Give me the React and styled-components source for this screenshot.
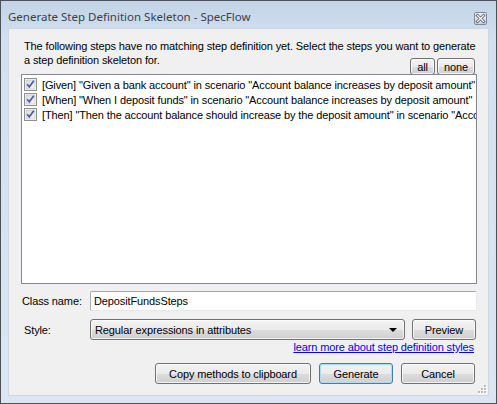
import React, { useState } from 'react';
import styled, { createGlobalStyle, css } from 'styled-components';

const GlobalStyle = createGlobalStyle`
  html, body {
    margin: 0;
    padding: 0;
    background: #ffffff;
  }
  * { box-sizing: border-box; }
`;

const steps = [
  { id: 1, kind: 'Given', text: '"Given a bank account" in scenario "Account balance increases by deposit amount"' },
  { id: 2, kind: 'When', text: '"When I deposit funds" in scenario "Account balance increases by deposit amount"' },
  { id: 3, kind: 'Then', text: '"Then the account balance should increase by the deposit amount" in scenario "Account balance increases by deposit amount"' },
];

const Window = styled.div`
  width: 497px;
  height: 404px;
  border: 1px solid #4d5157;
  background: linear-gradient(to bottom, #c3d4e8 0px, #d3e0ef 40px, #dbe6f2 100%);
  display: flex;
  flex-direction: column;
  padding: 0 7px 7px 7px;
  font-family: 'Liberation Sans', Arial, sans-serif;
  font-size: 11px;
  letter-spacing: -0.12px;
  color: #000;
`;

const TitleBar = styled.div`
  height: 27px;
  display: flex;
  align-items: center;
  justify-content: space-between;
  padding: 0 2px 0 0;
`;

const Title = styled.div`
  font-family: 'Noto Sans', 'Open Sans', sans-serif;
  font-size: 11.5px;
  letter-spacing: 0;
  color: #3a3f47;
  margin-top: 3px;
`;

const CloseBox = styled.div`
  width: 13px;
  height: 13px;
  margin-top: 7px;
  display: flex;
`;

const Client = styled.div`
  flex: 1;
  background: #f0f0f0;
  border: 1px solid #cdd7e3;
  padding: 10px 11px 0 12px;
  display: flex;
  flex-direction: column;
  position: relative;
`;

const Header = styled.div`
  display: grid;
  grid-template-columns: 1fr auto;
`;

const Description = styled.p`
  grid-row: 1;
  grid-column: 1 / -1;
  margin: 0 0 7px 3px;
  line-height: 14px;
  width: 452px;
`;

const SelectButtons = styled.div`
  grid-row: 1;
  grid-column: 2;
  align-self: end;
  display: flex;
  gap: 2px;
  margin: 0 2px -1px 0;
`;

const buttonSkin = css`
  font-family: 'Liberation Sans', Arial, sans-serif;
  font-size: 11px;
  letter-spacing: -0.12px;
  color: #000;
  border: 1px solid #707070;
  border-radius: 3px;
  background: linear-gradient(to bottom, #f2f2f2 0%, #ebebeb 50%, #dddddd 51%, #cfcfcf 100%);
  box-shadow: inset 0 0 0 1px rgba(255, 255, 255, 0.75);
  padding: 0;
`;

const SmallButton = styled.button`
  ${buttonSkin}
  width: ${p => p.$w}px;
  height: 17px;
  line-height: 14px;
`;

const StepList = styled.div`
  height: 210px;
  background: #fff;
  border: 1px solid #828790;
  padding: 2px 0 0 2px;
  overflow: hidden;
`;

const StepRow = styled.label`
  display: flex;
  align-items: center;
  height: 15px;
  gap: 5px;
  white-space: nowrap;
  cursor: default;
`;

const CheckBox = styled.span`
  flex: none;
  width: 13px;
  height: 13px;
  display: flex;
`;

const FieldRow = styled.div`
  display: flex;
  align-items: center;
  margin-top: ${p => p.$top}px;
`;

const FieldLabel = styled.span`
  width: 69px;
  padding-left: ${p => p.$indent}px;
  flex: none;
`;

const TextInput = styled.input`
  flex: 1;
  height: 20px;
  border: 1px solid #abadb3;
  border-top-color: #a3a6ad;
  border-right-color: #e3e9ef;
  border-bottom-color: #e3e9ef;
  border-radius: 2px;
  background: #fff;
  font-family: 'Liberation Sans', Arial, sans-serif;
  font-size: 11px;
  letter-spacing: -0.12px;
  padding: 0 0 0 3px;
  outline: none;
`;

const Combo = styled.div`
  ${buttonSkin}
  width: 315px;
  height: 21px;
  display: flex;
  align-items: center;
  justify-content: space-between;
  padding: 0 7px 0 4px;
`;

const Arrow = styled.span`
  width: 0;
  height: 0;
  border-left: 4px solid transparent;
  border-right: 4px solid transparent;
  border-top: 4px solid #000;
`;

const Button = styled.button`
  ${buttonSkin}
  width: ${p => p.$w}px;
  height: 21px;
  ${p => p.$default && css`
    border-color: #3c7fb1;
    box-shadow: inset 0 0 0 1px #a9dcf5, inset 0 0 2px 1px #c6ebfc;
  `}
`;

const PreviewButton = styled(Button)`
  margin-left: auto;
  margin-right: 1px;
`;

const LinkRow = styled.div`
  display: flex;
  justify-content: flex-end;
  padding-right: 3px;
`;

const Link = styled.a`
  color: #0000ff;
  text-decoration: underline;
  line-height: 14px;
`;

const ButtonBar = styled.div`
  display: flex;
  justify-content: flex-end;
  gap: 8px;
  margin-top: 9px;
  padding-right: 2px;
`;

const Grip = styled.svg`
  position: absolute;
  right: 1px;
  bottom: 1px;
`;

const CloseIcon = () => (
  <svg width="13" height="13" viewBox="0 0 13 13">
    <defs>
      <linearGradient id="cg" x1="0" y1="0" x2="0" y2="1">
        <stop offset="0" stopColor="#eef2f8" />
        <stop offset="1" stopColor="#c9d3e0" />
      </linearGradient>
    </defs>
    <rect x="0.5" y="0.5" width="12" height="12" rx="1.5" fill="url(#cg)" stroke="#7d8898" />
    <path d="M3.5 3.5 L9.5 9.5 M9.5 3.5 L3.5 9.5" stroke="#5f6670" strokeWidth="3" strokeLinecap="square" />
    <path d="M3.5 3.5 L9.5 9.5 M9.5 3.5 L3.5 9.5" stroke="#ffffff" strokeWidth="1.2" strokeLinecap="square" />
  </svg>
);

const CheckIcon = ({ checked }) => (
  <svg width="13" height="13" viewBox="0 0 13 13">
    <defs>
      <linearGradient id="cbg" x1="0" y1="0" x2="1" y2="1">
        <stop offset="0" stopColor="#dcdcdc" />
        <stop offset="1" stopColor="#f6f6f6" />
      </linearGradient>
    </defs>
    <rect x="0.5" y="0.5" width="12" height="12" fill="#fff" stroke="#8e8f8f" />
    <rect x="2" y="2" width="9" height="9" fill="url(#cbg)" stroke="#b9b9b9" strokeWidth="0.6" />
    {checked && (
      <path d="M3.2 6.3 L5.3 8.8 L9.8 2.8" fill="none" stroke="#4a5f97" strokeWidth="1.7" />
    )}
  </svg>
);

const GripIcon = () => (
  <Grip width="10" height="10" viewBox="0 0 10 10">
    {[[7, 1], [4, 4], [7, 4], [1, 7], [4, 7], [7, 7]].map(([x, y]) => (
      <g key={`${x}-${y}`}>
        <rect x={x + 1} y={y + 1} width="2" height="2" fill="#ffffff" />
        <rect x={x} y={y} width="2" height="2" fill="#b8bcc2" />
      </g>
    ))}
  </Grip>
);

export default function App() {
  const [checked, setChecked] = useState(steps.map(() => true));
  const [className, setClassName] = useState('DepositFundsSteps');

  const toggle = (i) => setChecked(prev => prev.map((c, j) => (j === i ? !c : c)));

  return (
    <>
      <GlobalStyle />
      <Window>
        <TitleBar>
          <Title>Generate Step Definition Skeleton - SpecFlow</Title>
          <CloseBox><CloseIcon /></CloseBox>
        </TitleBar>
        <Client>
          <Header>
            <Description>
              The following steps have no matching step definition yet. Select the steps you want to generate a step definition skeleton for.
            </Description>
            <SelectButtons>
              <SmallButton $w={25} onClick={() => setChecked(steps.map(() => true))}>all</SmallButton>
              <SmallButton $w={38} onClick={() => setChecked(steps.map(() => false))}>none</SmallButton>
            </SelectButtons>
          </Header>
          <StepList>
            {steps.map((s, i) => (
              <StepRow key={s.id} onClick={() => toggle(i)}>
                <CheckBox><CheckIcon checked={checked[i]} /></CheckBox>
                <span>[{s.kind}] {s.text}</span>
              </StepRow>
            ))}
          </StepList>
          <FieldRow $top={7}>
            <FieldLabel $indent={1}>Class name:</FieldLabel>
            <TextInput value={className} onChange={e => setClassName(e.target.value)} />
          </FieldRow>
          <FieldRow $top={8}>
            <FieldLabel $indent={3}>Style:</FieldLabel>
            <Combo>
              <span>Regular expressions in attributes</span>
              <Arrow />
            </Combo>
            <PreviewButton $w={64}>Preview</PreviewButton>
          </FieldRow>
          <LinkRow>
            <Link href="#">learn more about step definition styles</Link>
          </LinkRow>
          <ButtonBar>
            <Button $w={156}>Copy methods to clipboard</Button>
            <Button $w={74} $default>Generate</Button>
            <Button $w={74}>Cancel</Button>
          </ButtonBar>
          <GripIcon />
        </Client>
      </Window>
    </>
  );
}
